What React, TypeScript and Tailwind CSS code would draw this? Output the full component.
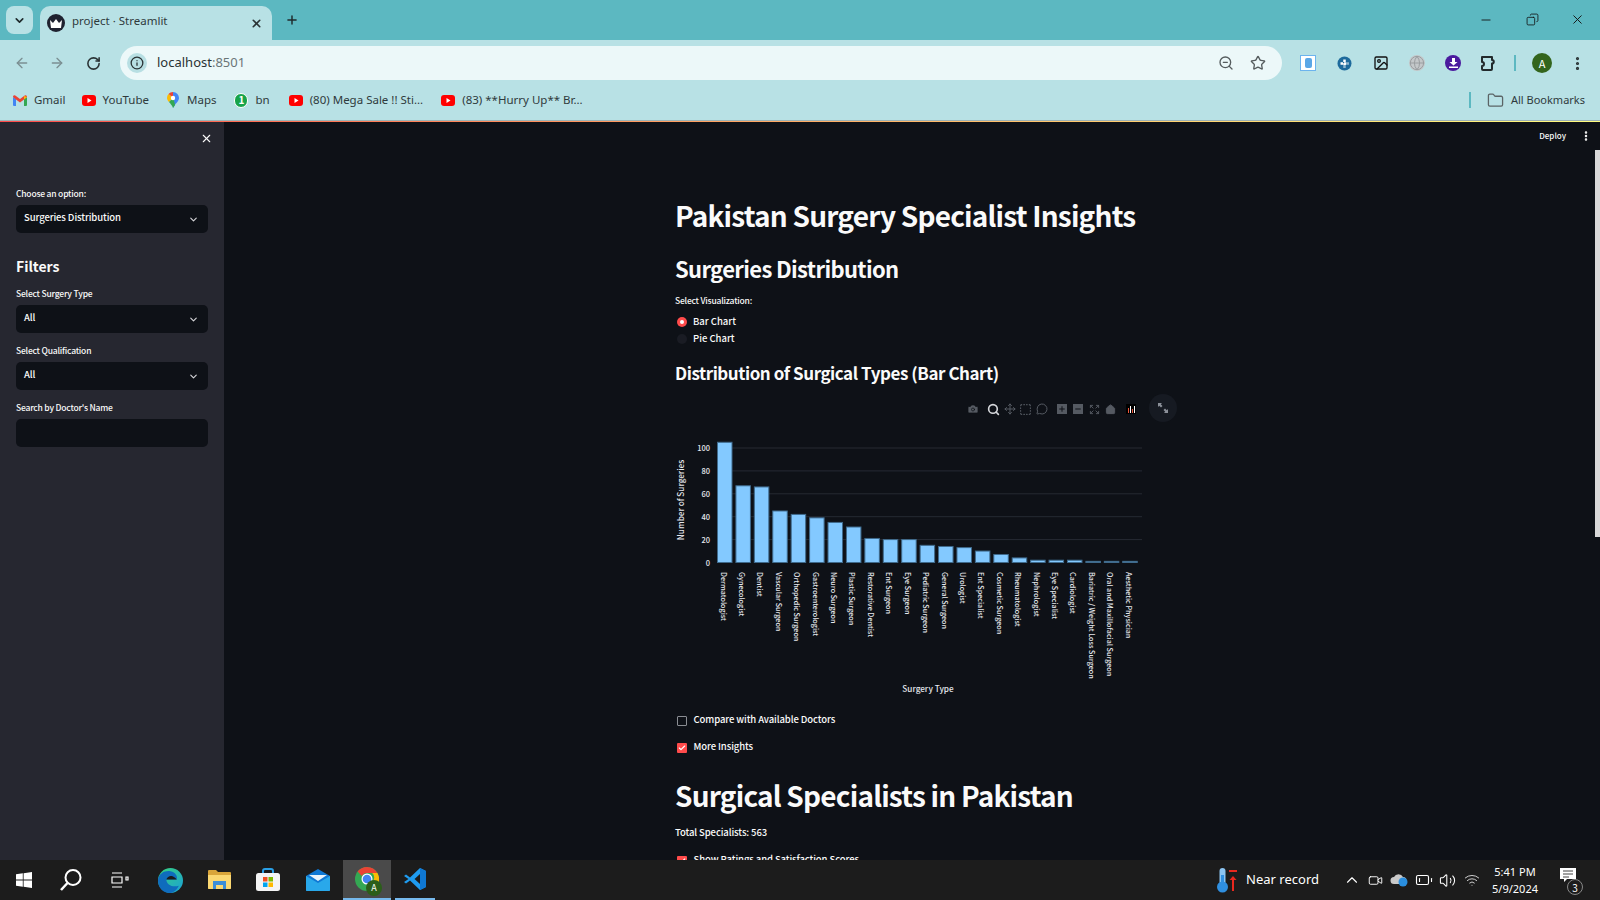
import React from 'react';
import { ArrowLeft, ArrowRight, RotateCw, Info, ZoomOut, Star, EllipsisVertical, ChevronDown, X, Plus, Minus, Folder, Copy, Camera, Move, House, Expand, Check, Search, ChevronUp, Volume2, Wifi, BatteryLow, Video, MessageCircle, SquareDashed, Image, Globe } from 'lucide-react';

const font = '"Noto Sans CJK JP", "Noto Sans", sans-serif';
const chromeFont = '"Noto Sans", sans-serif';

const surgeries: [string, number][] = [
  ['Dermatologist', 105], ['Gynecologist', 67], ['Dentist', 66], ['Vascular Surgeon', 45],
  ['Orthopedic Surgeon', 42], ['Gastroenterologist', 39], ['Neuro Surgeon', 35], ['Plastic Surgeon', 31],
  ['Restorative Dentist', 21], ['Ent Surgeon', 20], ['Eye Surgeon', 20], ['Pediatric Surgeon', 15],
  ['General Surgeon', 14], ['Urologist', 13], ['Ent Specialist', 10], ['Cosmetic Surgeon', 7],
  ['Rheumatologist', 4], ['Nephrologist', 2], ['Eye Specialist', 2], ['Cardiologist', 2],
  ['Bariatric / Weight Loss Surgeon', 1], ['Oral and Maxillofacial Surgeon', 1], ['Aesthetic Physician', 1],
];

const YouTubeIcon = () => (
  <svg width="14" height="11" viewBox="0 0 14 11">
    <rect width="14" height="11" rx="3" fill="#f00" />
    <path d="M5.5 3v5l4-2.5z" fill="#fff" />
  </svg>
);

const GmailIcon = () => (
  <svg width="14" height="11" viewBox="0 0 14 11">
    <path d="M0 2v8a1 1 0 0 0 1 1h2V4z" fill="#4285f4" />
    <path d="M14 2v8a1 1 0 0 1-1 1h-2V4z" fill="#34a853" />
    <path d="M0 2c0-2 2-2 3-1l4 3 4-3c1-1 3-1 3 1L11 4.5 7 7.5 3 4.500z" fill="#ea4335" />
    <path d="M11 1l3 1-3 2.500z" fill="#fbbc04" />
  </svg>
);

const MapsIcon = () => (
  <svg width="12" height="16" viewBox="0 0 12 16">
    <path d="M6 0a6 6 0 0 1 6 6c0 3-3 5-4 7l-2 3z" fill="#4285f4" />
    <path d="M6 0a6 6 0 0 0-4.500 2L6 6z" fill="#ea4335" />
    <path d="M1.500 2A6 6 0 0 0 0 6c0 1.500 1 3 2 4l4-4z" fill="#fbbc04" />
    <path d="M2 10c1.500 2 3 3 4 6l2-3c0-1-1-5-2-7z" fill="#34a853" />
    <circle cx="6" cy="6" r="2.200" fill="#fff" />
  </svg>
);

const WhatsAppBadge = () => (
  <span className="flex h-[15px] w-[15px] items-center justify-center rounded-full border border-white bg-[#16a34a] text-[10px] font-bold leading-none text-white">1</span>
);

const Bookmark = ({ icon, label, className }: { icon: React.ReactNode; label: string; className: string }) => (
  <div className={`flex items-center ${className}`}>
    <span className="flex w-[14px] shrink-0 items-center justify-center">{icon}</span>
    <span className="ml-[7px] whitespace-nowrap text-[11.500px] text-[#2f3a3c]" style={{ fontFamily: chromeFont }}>{label}</span>
  </div>
);

const Label = ({ children }: { children: React.ReactNode }) => (
  <div className="-translate-y-px text-[8.500px] font-medium leading-[14px] tracking-[-0.2px] text-[#fafafa]">{children}</div>
);

const SelectBox = ({ value }: { value: string }) => (
  <div className="mt-[4px] flex h-[28px] items-center justify-between rounded-[5px] bg-[#0e1117] pl-[8px] pr-[9px]">
    <span className="-mt-[3px] text-[9.500px] font-medium tracking-[-0.1px] text-[#fafafa]">{value}</span>
    <ChevronDown size={11} strokeWidth={2.500} className="text-[#d5d5d8]" />
  </div>
);

const BarChart = () => {
  const y0 = 132.500;
  const unit = 1.145;
  return (
    <svg width="500" height="270" viewBox="0 0 500 270" className="block" fontFamily={font}>
      {[20, 40, 60, 80, 100].map((t) => (
        <line key={t} x1="41" x2="466" y1={y0 - t * unit} y2={y0 - t * unit} stroke="#262a33" strokeWidth="1" />
      ))}
      {[0, 20, 40, 60, 80, 100].map((t) => (
        <text key={t} x="34" y={y0 - t * unit + 3} textAnchor="end" fontSize="7.500" fontWeight="500" fill="#e6e8ee">{t}</text>
      ))}
      {surgeries.map(([name, v], i) => {
        const x = 41 + i * 18.420;
        return (
          <g key={name}>
            <rect x={x + 0.500} y={y0 - v * unit} width="14.500" height={v * unit} fill="#83c9ff" stroke="#3f6a8c" strokeWidth="1" />
            <text transform={`translate(${x + 3.500} 142) rotate(90)`} fontSize="7.200" fontWeight="500" fill="#e6e8ee">{name}</text>
          </g>
        );
      })}
      <text transform="translate(8 70) rotate(-90)" textAnchor="middle" fontSize="8.200" fontWeight="500" fill="#e6e8ee">Number of Surgeries</text>
      <text x="252" y="262" textAnchor="middle" fontSize="8.200" fontWeight="500" fill="#e6e8ee">Surgery Type</text>
    </svg>
  );
};

const ChartToolbar = () => (
  <div className="relative flex h-[24px] w-[489px] items-center justify-end text-[#555a62]">
    <div className="flex items-center pr-[28px]">
      <Camera size={12} fill="#555a62" stroke="#0e1117" strokeWidth={1.500} />
      <Search size={13} strokeWidth={3} className="ml-[8px] text-[#d6d8dc]" />
      <Move size={12} className="ml-[4px]" />
      <SquareDashed size={13} className="ml-[3px]" />
      <MessageCircle size={12} className="ml-[4px]" />
      <span className="ml-[9px] flex h-[10px] w-[10px] items-center justify-center bg-[#555a62]"><Plus size={8} strokeWidth={3} className="text-[#0e1117]" /></span>
      <span className="ml-[6px] flex h-[10px] w-[10px] items-center justify-center bg-[#555a62]"><Minus size={8} strokeWidth={3} className="text-[#0e1117]" /></span>
      <Expand size={11} className="ml-[6px]" />
      <House size={11} fill="#555a62" className="ml-[5px]" />
      <span className="ml-[10px] flex h-[10px] w-[10px] items-end justify-center gap-px bg-black pb-px">
        <span className="h-[5px] w-px bg-[#ef553b]" />
        <span className="h-[7px] w-px bg-white" />
        <span className="h-[4px] w-px bg-[#ef553b]" />
        <span className="h-[7px] w-px bg-white" />
      </span>
    </div>
    <div className="absolute right-[-13px] top-[-3px] flex h-[28px] w-[28px] items-center justify-center rounded-full bg-[#161a22]">
      <svg width="12" height="12" viewBox="0 0 12 12" fill="#8b9099">
        <path d="M1 1h4L3.800 2.200 5.500 4 4 5.500 2.200 3.800 1 5zM11 11H7l1.200-1.200L6.500 8 8 6.500l1.800 1.700L11 7z" />
      </svg>
    </div>
  </div>
);

const CheckRow = ({ checked, label, className }: { checked: boolean; label: string; className: string }) => (
  <div className={`flex h-[17px] shrink-0 items-center ${className}`}>
    {checked ? (
      <span className="ml-[2px] flex h-[10px] w-[10px] items-center justify-center rounded-[1px] bg-[#ff4b4b]">
        <Check size={8} strokeWidth={3.500} className="text-white" />
      </span>
    ) : (
      <span className="ml-[2px] h-[10px] w-[10px] rounded-[1px] border border-[#8a8d93]" />
    )}
    <span className="-mt-[2px] ml-[6.500px] text-[9.500px] font-medium tracking-[-0.1px] text-[#fafafa]">{label}</span>
  </div>
);

const EdgeIcon = () => (
  <svg width="25" height="25" viewBox="0 0 24 24">
    <defs>
      <linearGradient id="edgeA" x1="0" y1="0" x2="1" y2="1"><stop offset="0" stopColor="#36d27c" /><stop offset="1" stopColor="#1ba0d8" /></linearGradient>
    </defs>
    <circle cx="12" cy="12" r="12" fill="url(#edgeA)" />
    <path d="M0 12C0 5 7 2 12 3c5 1 7 5 6 8H8c0 5 6 8 12 6-2 4-5 7-9 7C5 24 0 19 0 12z" fill="#0f6cbd" />
    <path d="M8 11c1-3 4-4 6-3 2 .8 3 2 4 3z" fill="#1b1b1b" />
  </svg>
);

const ExplorerIcon = () => (
  <svg width="23" height="20" viewBox="0 0 23 20">
    <path d="M0 1a1 1 0 0 1 1-1h7l2 2h12a1 1 0 0 1 1 1v15a1 1 0 0 1-1 1H1a1 1 0 0 1-1-1z" fill="#d9a53a" />
    <path d="M0 5h23v13a1 1 0 0 1-1 1H1a1 1 0 0 1-1-1z" fill="#fbd872" />
    <path d="M5 11h13v8h-3v-4H8v4H5z" fill="#3c8ed8" />
  </svg>
);

const StoreIcon = () => (
  <svg width="24" height="24" viewBox="0 0 24 24">
    <path d="M7 6V3a2 2 0 0 1 2-2h6a2 2 0 0 1 2 2v3" fill="none" stroke="#2aa0e6" strokeWidth="2" />
    <rect y="5" width="24" height="18" rx="2.500" fill="#f4f4f4" />
    <rect x="7" y="9" width="4.500" height="4.500" fill="#f25022" />
    <rect x="12.500" y="9" width="4.500" height="4.500" fill="#7fba00" />
    <rect x="7" y="14.500" width="4.500" height="4.500" fill="#00a4ef" />
    <rect x="12.500" y="14.500" width="4.500" height="4.500" fill="#ffb900" />
  </svg>
);

const MailIcon = () => (
  <svg width="24" height="22" viewBox="0 0 24 22">
    <path d="M12 0l12 7v14a1 1 0 0 1-1 1H1a1 1 0 0 1-1-1V7z" fill="#0f78d4" />
    <path d="M0 7l12 7 12-7v14a1 1 0 0 1-1 1H1a1 1 0 0 1-1-1z" fill="#29a8ea" />
    <path d="M3 6h18l-9 6z" fill="#e8f3fb" />
  </svg>
);

const ChromeIcon = () => (
  <div className="relative h-[24px] w-[24px]">
    <svg width="24" height="24" viewBox="0 0 24 24">
      <circle cx="12" cy="12" r="12" fill="#34a853" />
      <path d="M12 0a12 12 0 0 1 10.400 6H12a6 6 0 0 0-5.200 3L2.600 4.500A12 12 0 0 1 12 0z" fill="#ea4335" />
      <path d="M22.400 6A12 12 0 0 1 12 24l5.200-9a6 6 0 0 0 0-9z" fill="#fbbc04" />
      <circle cx="12" cy="12" r="5.500" fill="#fff" />
      <circle cx="12" cy="12" r="4.300" fill="#4285f4" />
    </svg>
    <span className="absolute -bottom-[5px] -right-[3px] flex h-[16px] w-[16px] items-center justify-center rounded-full bg-[#2c5e1a] text-[9px] text-white">A</span>
  </div>
);

const VSCodeIcon = () => (
  <svg width="24" height="24" viewBox="0 0 24 24">
    <path d="M17 1l6 3v16l-6 3L7 13.500l-4 3-2-1.500 4.500-3L1 9l2-1.500 4 3z" fill="#1f9cf0" />
    <path d="M17 7l-5.500 5 5.500 5z" fill="#1c1c1c" />
    <path d="M17 1l6 3v16l-6 3z" fill="#0f78d4" />
  </svg>
);

const ThermoIcon = () => (
  <svg width="24" height="26" viewBox="0 0 24 26">
    <rect x="4.500" y="1" width="6" height="17" rx="3" fill="#8cc4f0" />
    <circle cx="7.500" cy="20" r="5.500" fill="#2f8fe0" />
    <rect x="6" y="8" width="3" height="10" fill="#2f8fe0" />
    <path d="M18 9l3.500 4H19v11h-2V13h-2.500z" fill="#e8281e" />
    <rect x="14" y="3" width="8" height="2" fill="#e8281e" />
  </svg>
);

export default function App() {
  return (
    <div className="flex h-[900px] w-[1600px] flex-col overflow-hidden bg-[#0e1117]" style={{ fontFamily: font }}>
      {/* tab strip */}
      <div className="flex h-[40px] shrink-0 items-end bg-[#5cb8c1]">
        <div className="mb-[6px] ml-[6px] flex h-[28px] w-[27px] items-center justify-center rounded-[8px] bg-[#b8e1e5]">
          <ChevronDown size={13} strokeWidth={3} className="text-[#1f2a2c]" />
        </div>
        <div className="ml-[7px] flex h-[34px] w-[232px] items-center rounded-t-[10px] bg-[#b8e1e5] pl-[7px]">
          <span className="flex h-[18px] w-[18px] items-center justify-center rounded-full bg-[#1f2230]">
            <svg width="12" height="9" viewBox="0 0 12 9"><path d="M0 1l3 3 3-4 3 4 3-3-1 8H1z" fill="#fff" /></svg>
          </span>
          <span className="ml-[7px] -mt-[4px] whitespace-nowrap text-[11.500px] text-[#2f3a3c]" style={{ fontFamily: chromeFont }}>project · Streamlit</span>
          <div className="flex-1" />
          <X size={13} strokeWidth={3} className="mr-[9px] text-[#2a3335]" />
        </div>
        <Plus size={14} strokeWidth={2.500} className="mb-[13px] ml-[13px] text-[#1f2a2c]" />
        <div className="flex-1" />
        <div className="mb-[13px] flex items-center text-[#111]">
          <Minus size={14} strokeWidth={1.500} />
          <Copy size={13} strokeWidth={1.500} className="ml-[33px] -scale-x-100" />
          <X size={15} strokeWidth={1.500} className="ml-[31px] mr-[15px]" />
        </div>
      </div>

      {/* address bar */}
      <div className="flex h-[40px] shrink-0 items-end bg-[#b8e1e5]">
        <div className="flex h-[34px] w-full items-center">
          <ArrowLeft size={16} strokeWidth={2} className="ml-[14px] text-[#7b8f92]" />
          <ArrowRight size={16} strokeWidth={2} className="ml-[19px] text-[#7b8f92]" />
          <RotateCw size={15} strokeWidth={2.500} className="ml-[21px] text-[#2a3335]" />
          <div className="ml-[19px] flex h-[34px] w-[1162px] items-center rounded-full bg-[#ecf8f9] pl-[7px]">
            <span className="flex h-[20px] w-[20px] items-center justify-center rounded-full bg-[#b8dfe3]">
              <Info size={14} strokeWidth={2.200} className="text-[#2a3335]" />
            </span>
            <span className="ml-[10px] text-[13px] text-[#2a3335]" style={{ fontFamily: chromeFont }}>localhost<span className="text-[#6a7577]">:8501</span></span>
            <div className="flex-1" />
            <ZoomOut size={16} strokeWidth={2} className="text-[#555c5e]" />
            <Star size={16} strokeWidth={2} className="ml-[16px] mr-[16px] text-[#555c5e]" />
          </div>
          <span className="ml-[18px] flex h-[16px] w-[16px] items-center justify-center border border-[#6cb4ee] bg-white">
            <span className="h-[10px] w-[7px] rounded-[2px] bg-[#5aa7e6]" />
          </span>
          <svg width="15" height="15" viewBox="0 0 15 15" className="ml-[21px]">
            <circle cx="7.500" cy="7.500" r="7" fill="#1d6a9c" />
            <path d="M7.500 3.500v8M3.500 7.500h8" stroke="#fff" strokeWidth="2.500" strokeDasharray="2.500 1" />
          </svg>
          <Image size={16} strokeWidth={2} className="ml-[21px] text-[#111]" />
          <span className="ml-[20px] flex h-[16px] w-[16px] items-center justify-center rounded-full bg-[#c4c8ca]">
            <Globe size={16} strokeWidth={1.500} className="text-[#9a9ea1]" />
          </span>
          <span className="ml-[20px] flex h-[16px] w-[16px] items-center justify-center rounded-full bg-[#4a1a9e]">
            <svg width="9" height="10" viewBox="0 0 9 10" fill="#fff"><path d="M3 0h3v4h2.500L4.500 7.500.500 4H3zM0 8.500h9V10H0z" /></svg>
          </span>
          <svg width="17" height="17" viewBox="0 0 17 17" fill="none" stroke="#222a2c" strokeWidth="2" className="ml-[19px]">
            <path d="M2 2h10v3a1.800 1.800 0 0 1 0 3.600V14a1 1 0 0 1-1 1H3a1 1 0 0 1-1-1v-3a2 2 0 0 0 0-4z" strokeLinejoin="round" />
          </svg>
          <span className="ml-[17px] h-[16px] w-[2px] bg-[#5cb8c1]" />
          <span className="ml-[16px] flex h-[20px] w-[20px] items-center justify-center rounded-full bg-[#33651d] text-[11px] text-white">A</span>
          <EllipsisVertical size={17} strokeWidth={2.500} className="ml-[17px] text-[#2a3335]" />
        </div>
      </div>

      {/* bookmarks */}
      <div className="flex h-[40px] shrink-0 items-center bg-[#b8e1e5]">
        <Bookmark icon={<GmailIcon />} label="Gmail" className="ml-[13px]" />
        <Bookmark icon={<YouTubeIcon />} label="YouTube" className="ml-[16px]" />
        <Bookmark icon={<MapsIcon />} label="Maps" className="ml-[17px]" />
        <Bookmark icon={<WhatsAppBadge />} label="bn" className="ml-[18px]" />
        <Bookmark icon={<YouTubeIcon />} label="(80) Mega Sale !! Sti..." className="ml-[19px]" />
        <Bookmark icon={<YouTubeIcon />} label="(83) **Hurry Up** Br..." className="ml-[18px]" />
        <div className="flex-1" />
        <span className="h-[16px] w-[2px] bg-[#5cb8c1]" />
        <Folder size={17} strokeWidth={1.800} className="ml-[16px] text-[#5b6466]" />
        <span className="ml-[7px] mr-[15px] text-[11px] text-[#2f3a3c]" style={{ fontFamily: chromeFont }}>All Bookmarks</span>
      </div>

      <div className="h-px shrink-0 bg-[#9db3b5]" />
      <div className="h-px shrink-0 bg-gradient-to-r from-[#ff4b4b] to-[#fffd80]" />

      {/* app */}
      <div className="relative flex min-h-0 flex-1">
        <aside className="w-[224px] shrink-0 bg-[#262730] px-[16px]">
          <div className="flex h-[23px] items-end justify-end">
            <X size={13} strokeWidth={2} className="-mr-[5px] text-[#fafafa]" />
          </div>
          <div className="mt-[42px]"><Label>Choose an option:</Label></div>
          <SelectBox value="Surgeries Distribution" />
          <div className="mt-[21px] text-[14px] font-bold leading-[24px] text-[#fafafa]">Filters</div>
          <div className="mt-[9px]"><Label>Select Surgery Type</Label></div>
          <SelectBox value="All" />
          <div className="mt-[11px]"><Label>Select Qualification</Label></div>
          <SelectBox value="All" />
          <div className="mt-[11px]"><Label>Search by Doctor's Name</Label></div>
          <div className="mt-[4px] h-[28px] rounded-[5px] bg-[#0e1117]" />
        </aside>

        <main className="relative min-w-0 flex-1 overflow-hidden pl-[451px]">
          <div className="absolute right-[8px] top-[8px] flex items-center text-[#fafafa]">
            <span className="text-[8px] font-medium">Deploy</span>
            <EllipsisVertical size={12} strokeWidth={3} className="ml-[14px]" />
          </div>
          <div className="absolute right-0 top-[28px] h-[387px] w-[5px] bg-[#d9d9d9]" />

          <h1 className="mt-[73px] whitespace-nowrap text-[28px] font-bold leading-[40px] tracking-[-0.8px] text-[#fafafa]">Pakistan Surgery Specialist Insights</h1>
          <h2 className="mt-[17px] text-[22px] font-semibold leading-[32px] tracking-[-0.65px] text-[#fafafa]">Surgeries Distribution</h2>
          <div className="mt-[10px]"><Label>Select Visualization:</Label></div>
          <div className="mt-[5px] flex h-[17.500px] items-center">
            <span className="ml-[2px] flex h-[10px] w-[10px] items-center justify-center rounded-full bg-[#ff4b4b]">
              <span className="h-[4px] w-[4px] rounded-full bg-white" />
            </span>
            <span className="-mt-[2px] ml-[6px] text-[9.500px] font-medium text-[#fafafa]">Bar Chart</span>
          </div>
          <div className="flex h-[17.500px] items-center">
            <span className="ml-[2px] h-[10px] w-[10px] rounded-full bg-[#1a1c24]" />
            <span className="-mt-[2px] ml-[6px] text-[9.500px] font-medium text-[#fafafa]">Pie Chart</span>
          </div>
          <h3 className="mt-[12px] text-[17px] font-semibold leading-[26px] tracking-[-0.45px] text-[#fafafa]">Distribution of Surgical Types (Bar Chart)</h3>
          <div className="mt-[11px]"><ChartToolbar /></div>
          <div className="ml-[1px] mt-[9px]"><BarChart /></div>
          <CheckRow checked={false} label="Compare with Available Doctors" className="mt-[12px]" />
          <CheckRow checked label="More Insights" className="mt-[10px]" />
          <h1 className="mt-[19px] whitespace-nowrap text-[28px] font-bold leading-[40px] tracking-[-0.8px] text-[#fafafa]">Surgical Specialists in Pakistan</h1>
          <div className="mt-[9px] text-[9.500px] font-medium leading-[17px] tracking-[-0.1px] text-[#fafafa]">Total Specialists: 563</div>
          <CheckRow checked label="Show Ratings and Satisfaction Scores" className="mt-[11px]" />
        </main>
      </div>

      {/* taskbar */}
      <div className="z-10 flex h-[40px] shrink-0 items-center bg-[#1c1c1c] text-white">
        <svg width="16" height="16" viewBox="0 0 16 16" fill="#fff" className="ml-[16px]">
          <path d="M0 2.300l6.800-1v6.300H0zM7.600 1.200L16 0v7.600H7.600zM0 8.400h6.800v6.300l-6.800-1zM7.600 8.400H16V16l-8.400-1.200z" />
        </svg>
        <svg width="24" height="24" viewBox="0 0 24 24" fill="none" stroke="#fff" strokeWidth="2" className="ml-[27px]">
          <circle cx="14" cy="9.500" r="7.500" /><path d="M8.500 15L2 22" strokeWidth="2.500" />
        </svg>
        <svg width="18" height="16" viewBox="0 0 18 16" fill="none" stroke="#fff" strokeWidth="1.200" className="ml-[28px]">
          <path d="M1 1h10M1 15h10M1 5h10v6H1zM15 5h2v3h-2z" />
        </svg>
        <span className="ml-[29px]"><EdgeIcon /></span>
        <span className="ml-[25px]"><ExplorerIcon /></span>
        <span className="ml-[25px]"><StoreIcon /></span>
        <span className="ml-[26px]"><MailIcon /></span>
        <div className="relative ml-[13px] flex h-[40px] w-[48px] items-center justify-center border-b-2 border-[#76b9ed] bg-[#4a4a4a]"><ChromeIcon /></div>
        <div className="flex h-[40px] w-[48px] items-center justify-center"><div className="flex h-[40px] w-[40px] items-center justify-center border-b-2 border-[#76b9ed]"><VSCodeIcon /></div></div>

        <div className="flex-1" />
        <ThermoIcon />
        <span className="ml-[7px] text-[13px]" style={{ fontFamily: chromeFont }}>Near record</span>
        <ChevronUp size={18} strokeWidth={1.500} className="ml-[24px]" />
        <Video size={15} strokeWidth={1.500} className="ml-[7px]" />
        <svg width="18" height="14" viewBox="0 0 18 14" className="ml-[7px]">
          <path d="M4 11a3.500 3.500 0 0 1 0-7 5 5 0 0 1 9 0 3.500 3.500 0 0 1 0 7z" fill="#c9c9c9" />
          <circle cx="13" cy="9" r="4.500" fill="#2a8fe0" />
        </svg>
        <BatteryLow size={18} strokeWidth={1.500} className="ml-[7px]" />
        <Volume2 size={17} strokeWidth={1.500} className="ml-[6px]" />
        <Wifi size={16} strokeWidth={1.500} className="ml-[8px] text-[#cfcfcf]" />
        <div className="ml-[6px] flex w-[58px] flex-col items-center text-[11px] leading-[17px]" style={{ fontFamily: chromeFont }}>
          <span>5:41 PM</span>
          <span>5/9/2024</span>
        </div>
        <div className="relative ml-[16px] mr-[18px] h-[24px] w-[22px]">
          <svg width="16" height="15" viewBox="0 0 16 15" fill="#fff" className="absolute left-0 top-0">
            <path d="M0 0h16v11H7l-3 3v-3H0z" />
            <path d="M3 3h10M3 6h10M3 9h6" stroke="#444" strokeWidth="1" />
          </svg>
          <span className="absolute -bottom-[3px] -right-[1px] flex h-[16px] w-[16px] items-center justify-center rounded-full border border-[#888] bg-[#1c1c1c] text-[10px]">3</span>
        </div>
      </div>
    </div>
  );
}
